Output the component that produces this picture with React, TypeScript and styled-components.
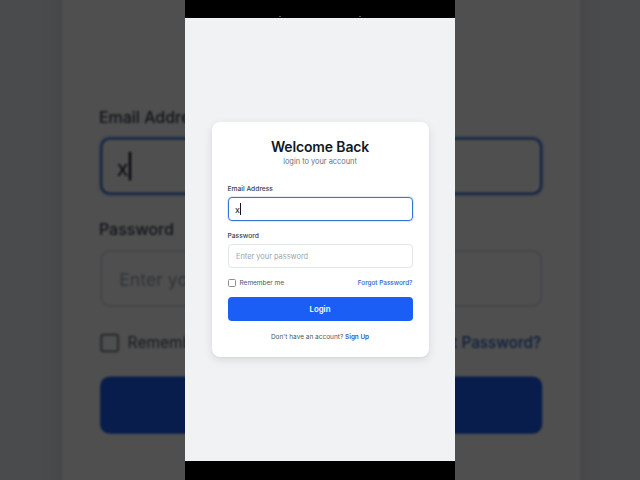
import React from "react";
import styled, { createGlobalStyle } from "styled-components";

const Global = createGlobalStyle`
  html, body { margin: 0; padding: 0; background: #000; }
  body { font-family: Inter, "Noto Sans", Arial, sans-serif; -webkit-font-smoothing: antialiased; }
  * { box-sizing: border-box; }
`;

const Stage = styled.div`
  position: relative;
  width: 640px;
  height: 480px;
  overflow: hidden;
  background: #4a4b4c;
  display: flex;
  justify-content: center;
`;

const Backdrop = styled.div`
  position: absolute;
  inset: 0;
  display: flex;
  align-items: center;
  justify-content: center;
  filter: brightness(0.31) blur(1.3px);
  pointer-events: none;
  clip-path: polygon(0 0, 185px 0, 185px 100%, 455px 100%, 455px 0, 100% 0, 100% 100%, 0 100%);
`;

const BackdropScreen = styled.div`
  width: 270px;
  height: 443px;
  flex-shrink: 0;
  display: flex;
  transform: translateY(-1.5px) scale(2.39);
  transform-origin: center center;
`;

const Phone = styled.div`
  position: relative;
  z-index: 1;
  width: 270px;
  height: 480px;
  display: flex;
  flex-direction: column;
`;

const Bar = styled.div<{ $h: number }>`
  height: ${(p) => p.$h}px;
  flex-shrink: 0;
  background: #000;
  display: flex;
  align-items: flex-end;
  justify-content: center;
  gap: 78px;
  padding-bottom: 1px;
`;

const Speck = styled.span`
  width: 2px;
  height: 1px;
  background: #555;
`;

const Screen = styled.div`
  flex: 1;
  width: 100%;
  background: #f0f2f4;
  display: flex;
  align-items: center;
  justify-content: center;
`;

const Card = styled.div`
  width: 217px;
  background: #fff;
  border-radius: 8px;
  box-shadow: 0 3px 10px rgba(17, 24, 39, 0.1), 0 1px 2px rgba(17, 24, 39, 0.05);
  padding: 16px 16px 16px;
  display: flex;
  flex-direction: column;
`;

type G = { $ghost?: boolean };

const Title = styled.h1<G>`
  margin: 0;
  font-size: 14px;
  line-height: 17px;
  font-weight: 600;
  color: #111827;
  text-align: center;
  letter-spacing: -0.15px;
  visibility: ${(p) => (p.$ghost ? "hidden" : "visible")};
`;

const Subtitle = styled.p<G>`
  margin: 2.5px 0 0;
  font-size: 7.4px;
  line-height: 9px;
  color: #6b7280;
  text-align: center;
  visibility: ${(p) => (p.$ghost ? "hidden" : "visible")};
`;

const Label = styled.div<{ $top: number }>`
  margin-top: ${(p) => p.$top}px;
  font-size: 6.7px;
  line-height: 8px;
  font-weight: 500;
  color: #374151;
`;

const Field = styled.div<{ $focused?: boolean }>`
  margin-top: 4px;
  height: 24px;
  border-radius: 4px;
  border: ${(p) => (p.$focused ? "1.5px solid #3a73d8" : "1px solid #e2e5ea")};
  box-shadow: ${(p) => (p.$focused ? "0 0 0 1px rgba(59,115,216,0.15)" : "none")};
  background: #fff;
  display: flex;
  align-items: center;
  padding-left: ${(p) => (p.$focused ? "6.5px" : "7.5px")};
  font-size: 9px;
  color: #111827;
`;

const Placeholder = styled.span`
  font-size: 7.4px;
  color: #9ca3af;
`;

const Caret = styled.span`
  display: inline-block;
  width: 1px;
  height: 12px;
  background: #111827;
  margin-left: 0.5px;
`;

const Row = styled.div`
  margin-top: 11px;
  display: flex;
  align-items: center;
  justify-content: space-between;
  height: 8px;
`;

const Check = styled.label<G>`
  display: flex;
  align-items: center;
  gap: 4px;
  font-size: 6.5px;
  color: #4b5563;
`;

const Box = styled.span`
  width: 8px;
  height: 8px;
  border: 1px solid #8a9099;
  border-radius: 1.5px;
  background: #fff;
`;

const Link = styled.a<{ $bold?: boolean }>`
  font-size: 6.4px;
  font-weight: ${(p) => (p.$bold ? 600 : 500)};
  color: #2f62c4;
  text-decoration: none;
`;

const Button = styled.button`
  margin-top: 10px;
  height: 24px;
  border: none;
  border-radius: 4px;
  background: #1b5ef6;
  color: #fff;
  font-family: inherit;
  font-size: 7.8px;
  font-weight: 600;
  cursor: pointer;
`;

const ButtonLabel = styled.span<G>`
  visibility: ${(p) => (p.$ghost ? "hidden" : "visible")};
`;

const Footer = styled.p<G>`
  margin: 12px 0 0;
  text-align: center;
  font-size: 6.5px;
  line-height: 8px;
  color: #4b5563;
  visibility: ${(p) => (p.$ghost ? "hidden" : "visible")};
`;

function LoginScreen({ ghost = false }: { ghost?: boolean }) {
  return (
    <Screen>
      <Card>
        <Title $ghost={ghost}>Welcome Back</Title>
        <Subtitle $ghost={ghost}>login to your account</Subtitle>
        <Label $top={19}>Email Address</Label>
        <Field $focused>
          x<Caret />
        </Field>
        <Label $top={11}>Password</Label>
        <Field>
          <Placeholder>Enter your password</Placeholder>
        </Field>
        <Row>
          <Check>
            <Box />
            Remember me
          </Check>
          <Link href="#">Forgot Password?</Link>
        </Row>
        <Button>
          <ButtonLabel $ghost={ghost}>Login</ButtonLabel>
        </Button>
        <Footer $ghost={ghost}>
          Don't have an account? <Link $bold href="#">Sign Up</Link>
        </Footer>
      </Card>
    </Screen>
  );
}

export default function App() {
  return (
    <>
      <Global />
      <Stage>
        <Backdrop aria-hidden>
          <BackdropScreen>
            <LoginScreen ghost />
          </BackdropScreen>
        </Backdrop>
        <Phone>
          <Bar $h={18}>
            <Speck />
            <Speck />
          </Bar>
          <LoginScreen />
          <Bar $h={19} />
        </Phone>
      </Stage>
    </>
  );
}
